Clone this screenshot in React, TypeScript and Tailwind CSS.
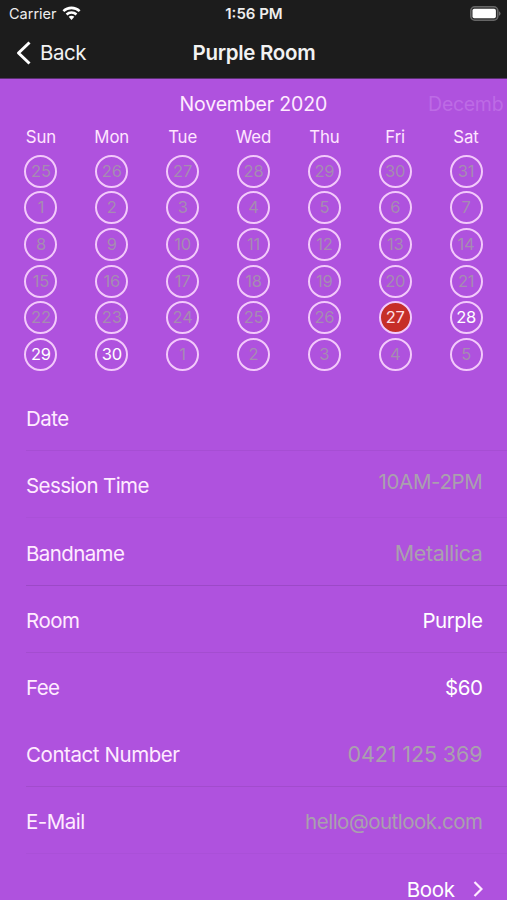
import React from 'react';

const weekdays = ['Sun', 'Mon', 'Tue', 'Wed', 'Thu', 'Fri', 'Sat'];

// Sunday 25 October to Saturday 5 December
const days = Array.from({ length: 42 }, (_, i) => {
  const date = i < 7 ? 25 + i : i < 37 ? i - 6 : i - 36;
  return { id: i, date, open: i >= 34 && i <= 36, selected: i === 33 };
});

const rows = [
  { label: 'Date', value: '', labelClass: 'tracking-[-0.5px]', valueClass: '', line: 'border-[#a64ed3]' },
  { label: 'Session Time', value: '10AM-2PM', labelClass: 'tracking-[-0.6px]', valueClass: 'text-[#aaa0ae] tracking-[-0.35px] -mt-2', line: 'border-[#aa50d8]' },
  { label: 'Bandname', value: 'Metallica', labelClass: 'tracking-[-0.6px]', valueClass: 'text-[#aaa0ae] text-[21.5px] tracking-[-0.4px] -mt-0.5', line: 'border-[#9c49c7]' },
  { label: 'Room', value: 'Purple', labelClass: 'tracking-[-0.5px]', valueClass: 'text-white tracking-[-0.45px]', line: 'border-[#a44dd0]' },
  { label: 'Fee', value: '$60', labelClass: 'tracking-[-0.6px]', valueClass: 'text-white tracking-[-0.4px]', line: 'border-transparent' },
  { label: 'Contact Number', value: '0421 125 369', labelClass: 'tracking-[-0.43px]', valueClass: 'text-[#aaa0ae] text-[21.5px] tracking-[-0.1px] -mt-0.5', line: 'border-[#a24ccd]' },
  { label: 'E-Mail', value: 'hello@outlook.com', labelClass: 'tracking-[-0.5px]', valueClass: 'text-[#aaa0ae] tracking-[-0.5px]', line: 'border-[#aa50d8]' },
];

function StatusBar() {
  return (
    <div className="grid h-[27px] grid-cols-[1fr_auto_1fr] items-center pl-[9px] pr-[6px] text-[15px] text-[#eeeeee]">
      <div className="flex items-center gap-[5px]">
        <span className="text-[14.5px]">Carrier</span>
        <svg className="h-[15px] w-[19px]" viewBox="0 0 19 15" fill="white">
          <path d="M9.5 0.6c3.4 0 6.6 1.3 9 3.6l-1.7 1.9a10.6 10.6 0 0 0-14.6 0L.5 4.2A13 13 0 0 1 9.5.6z" />
          <path d="M9.5 5.3c2.2 0 4.2.8 5.8 2.2l-1.7 1.9a6.2 6.2 0 0 0-8.2 0L3.7 7.5a8.7 8.7 0 0 1 5.8-2.2z" />
          <path d="M9.5 9.7c1 0 2 .4 2.8 1l-2.8 3.2-2.8-3.2c.8-.6 1.8-1 2.8-1z" />
        </svg>
      </div>
      <div className="-ml-[2px] pt-0.5 text-center font-semibold">1:56 PM</div>
      <svg className="h-[15px] w-[31px] justify-self-end" viewBox="0 0 31 15">
        <rect x="0.8" y="0.8" width="27" height="13.4" rx="4" fill="#2c2c2c" stroke="#666666" strokeWidth="1.6" />
        <rect x="2.5" y="2.8" width="23.4" height="9.4" rx="1.8" fill="white" />
        <path d="M29 5.2a2.5 2.5 0 0 1 0 4.6z" fill="#6c6c6c" />
      </svg>
    </div>
  );
}

function NavBar() {
  return (
    <div className="grid h-[51px] grid-cols-[1fr_auto_1fr] items-center pl-[16px] pr-[15px] pt-px text-[20.5px] text-[#f2f2f2]">
      <div className="flex items-center gap-[9px]">
        <svg className="h-[24px] w-[15px]" viewBox="0 0 15 24" fill="none" stroke="white" strokeWidth="3">
          <path d="M13.5 1.5 2.5 12l11 10.5" strokeLinejoin="round" />
        </svg>
        <span className="tracking-[-0.5px]">Back</span>
      </div>
      <h1 className="font-semibold tracking-[-0.3px]">Purple Room</h1>
    </div>
  );
}

function Calendar() {
  return (
    <section className="px-[5.5px]">
      <div className="flex h-[44px] items-center gap-[101px] whitespace-nowrap pl-[174px] pt-[8px] text-[19.5px] tracking-[-0.15px] text-[#ffebff]">
        <span>November 2020</span>
        <span className="tracking-[-0.3px] text-[#bd6be5]">Decemb</span>
      </div>
      <div className="grid grid-cols-7 text-center text-[16.8px] leading-[28px] tracking-[-0.1px] text-[#ffe6ff]">
        {weekdays.map((day) => (
          <div key={day}>{day}</div>
        ))}
      </div>
      <div className="mt-[3.5px] grid grid-cols-7 justify-items-center gap-y-[3.7px]">
        {days.map((day) => (
          <div
            key={day.id}
            className={`flex size-[33px] items-center justify-center rounded-full border-2 border-[#f3c9fb] text-[16.5px] tracking-[-0.2px] ${
              day.selected ? 'bg-[#c62e28] text-[#ffe0e8]' : day.open ? 'text-white' : 'text-[#a68bb2]'
            }`}
          >
            {day.date}
          </div>
        ))}
      </div>
    </section>
  );
}

export default function App() {
  return (
    <div className="h-[900px] w-full overflow-hidden bg-[#af52de] font-['Inter',sans-serif]">
      <header className="h-[79px] border-b border-[#5a3070] bg-[#1c1c1c]">
        <StatusBar />
        <NavBar />
      </header>
      <Calendar />

      {/* Booking form */}
      <section className="mt-[13px] text-[20.5px]">
        {rows.map((row) => (
          <div key={row.label} className={`ml-[26px] flex h-[67.2px] items-center justify-between border-b pr-[24.5px] pt-[5px] ${row.line}`}>
            <span className={`text-[#ffebff] ${row.labelClass}`}>{row.label}</span>
            <span className={row.valueClass}>{row.value}</span>
          </div>
        ))}
        <div className="flex h-[67.2px] items-center justify-end gap-[18px] pr-[24.5px] pt-[5px] text-white">
          <span className="tracking-[-0.4px]">Book</span>
          <svg className="-mt-[3px] h-[16px] w-[10px]" viewBox="0 0 10 16" fill="none" stroke="#ffebff" strokeWidth="2.2">
            <path d="m1.5 1 7 7-7 7" />
          </svg>
        </div>
      </section>
    </div>
  );
}
